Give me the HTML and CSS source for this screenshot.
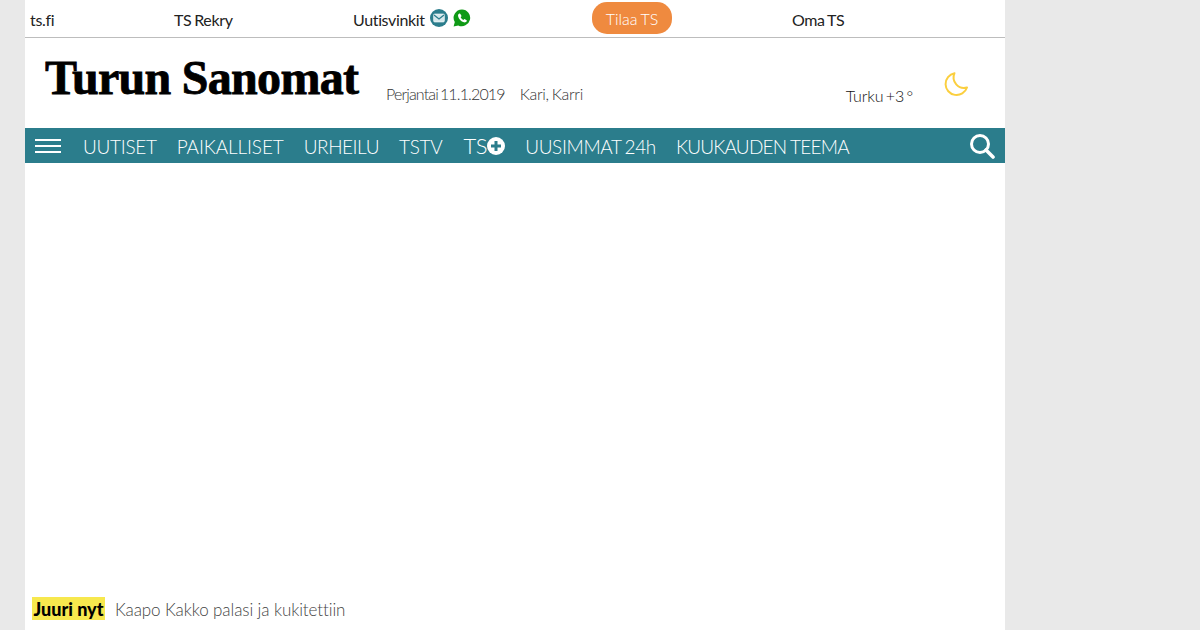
FILE: index.html
```html
<!DOCTYPE html>
<html lang="fi">
<head>
<meta charset="utf-8">
<title>Turun Sanomat</title>
<link rel="stylesheet" href="styles.css">
</head>
<body>
<div class="page">
  <div class="topbar">
    <a class="top-link">ts.fi</a>
    <a class="top-link">TS Rekry</a>
    <div class="top-link tips">Uutisvinkit
      <svg class="tip-icon" viewBox="0 0 18 18" width="18" height="18"><circle cx="9" cy="9" r="9" fill="#2b7d8c"/><rect x="3.6" y="5" width="10.8" height="8" rx="1.2" fill="#d5e8ec" stroke="#fff" stroke-width=".6"/><path d="M4 6l5 4 5-4" fill="none" stroke="#2b7d8c" stroke-width="1.3"/></svg>
      <svg class="tip-icon wa" viewBox="0 0 18 18" width="18" height="18"><path d="M9 .4a8.4 8.4 0 0 0-7.2 12.7L.6 17.6l4.6-1.2A8.4 8.4 0 1 0 9 .4z" fill="#0f9a16"/><path d="M6.3 4.4c-.9.5-1.5 1.500-1.200 2.900.5 2.700 3 5.300 5.800 6 1.300.3 2.300-.2 2.800-1.100.2-.4.200-.8-.1-1l-1.700-1c-.3-.2-.6-.1-.8.100l-.6.700c-1.300-.5-2.400-1.600-2.900-2.900l.7-.6c.2-.2.300-.5.100-.8l-1-1.800c-.2-.4-.7-.6-1.100-.4z" fill="#fff"/></svg>
    </div>
    <div class="top-cta"><a class="order">Tilaa TS</a></div>
    <a class="top-link">Oma TS</a>
  </div>

  <header class="masthead">
    <div class="logo">Turun Sanomat</div>
    <div class="dateline">
      <span class="date">Perjantai 11.1.2019</span>
      <span>Kari, Karri</span>
    </div>
    <div class="weather">
      <span class="temp">Turku +3 °</span>
      <svg class="moon" viewBox="0 0 26 26" width="26" height="26"><path d="M11.500 2.200A11 11 0 1 0 24 16.500 10.500 10.500 0 0 1 11.500 2.200z" fill="none" stroke="#fbcf3f" stroke-width="2" stroke-linejoin="round"/></svg>
    </div>
  </header>

  <nav class="nav">
    <div class="burger"><i></i><i></i><i></i></div>
    <a>UUTISET</a>
    <a class="wide">PAIKALLISET</a>
    <a class="sport">URHEILU</a>
    <a>TSTV</a>
    <a class="plus">TS<svg viewBox="0 0 18 18" width="18" height="18"><circle cx="9" cy="9" r="9" fill="#fff"/><path d="M9 4v10M4 9h10" stroke="#2b7d8c" stroke-width="3"/></svg></a>
    <a class="mid">UUSIMMAT 24h</a>
    <a class="long">KUUKAUDEN TEEMA</a>
    <svg class="search" viewBox="0 0 26 26" width="26" height="26"><circle cx="11" cy="11" r="8.500" fill="none" stroke="#fff" stroke-width="3"/><path d="M17 17l7 7" stroke="#fff" stroke-width="3.600" stroke-linecap="round"/></svg>
  </nav>

  <main class="content"></main>

  <div class="ticker">
    <span class="now">Juuri nyt</span>
    <span class="headline">Kaapo Kakko palasi ja kukitettiin</span>
  </div>
</div>
</body>
</html>
```

FILE: styles.css
```css
* { box-sizing: border-box; }
html, body { height: 100%; }
body {
  margin: 0;
  background: #e9e9e9;
  font-family: "Lato", "Open Sans", sans-serif;
  font-variant-ligatures: none;
  overflow: hidden;
}
.page {
  width: 980px;
  height: 630px;
  margin-left: 25px;
  background: #fff;
  display: flex;
  flex-direction: column;
}
.topbar {
  height: 38px;
  flex: none;
  border-bottom: 1px solid #bdbdbd;
  padding-left: 5px;
  display: grid;
  grid-template-columns: 144px 179px 239px 200px 1fr;
  align-items: center;
  font-size: 16px;
  color: #222;
}
.top-link { display: flex; align-items: center; padding-top: 1px; word-spacing: -1px; letter-spacing: -.35px; }
.tips svg { margin-left: 5px; margin-top: -3px; }
.top-cta { display: flex; }
.order {
  width: 80px;
  height: 32px;
  margin-top: -2px;
  border-radius: 15px;
  background: #ef8a3f;
  color: #fff;
  font-weight: 300;
  display: flex;
  align-items: center;
  justify-content: center;
  padding-top: 2px;
  word-spacing: -1px;
}
.masthead {
  height: 90px;
  flex: none;
  display: flex;
  align-items: flex-start;
  padding-left: 20px;
}
.logo {
  width: 341px;
  margin-top: 12px;
  font-family: "Liberation Serif", serif;
  font-weight: 700;
  font-size: 48px;
  line-height: 56px;
  letter-spacing: -.7px;
  color: #000;
  -webkit-text-stroke: .8px #000;
  white-space: nowrap;
}
.dateline {
  margin-top: 46px;
  display: flex;
  gap: 15px;
  font-size: 16px;
  font-weight: 300;
  color: #333;
  word-spacing: -1px;
  letter-spacing: -.3px;
}
.date { letter-spacing: -.85px; word-spacing: -1.5px; }
.weather {
  margin-left: auto;
  margin-right: 36px;
  margin-top: 33px;
  display: flex;
  align-items: flex-start;
  gap: 30px;
  font-size: 16px;
  font-weight: 300;
  color: #111;
  letter-spacing: -.15px;
  word-spacing: -1.7px;
}
.temp { margin-top: 15px; }
.nav {
  height: 35px;
  flex: none;
  background: #2b7d8c;
  color: #fff;
  display: flex;
  align-items: center;
  gap: 20px;
  padding: 0 10px;
  font-size: 19px;
  font-weight: 300;
  letter-spacing: -.3px;
  word-spacing: -1.5px;
}
.nav a { display: flex; align-items: center; padding-top: 2px; white-space: nowrap; }
.nav .wide { letter-spacing: -.12px; }
.nav .sport { letter-spacing: -.45px; }
.nav .mid { letter-spacing: -.35px; }
.nav .long { letter-spacing: -.8px; word-spacing: 0; }
.burger { width: 26px; margin-right: 2px; display: flex; flex-direction: column; gap: 4px; }
.burger i { display: block; height: 2px; background: #fff; }
.nav .plus { font-size: 22px; padding-top: 0; margin-left: 1px; }
.search { margin-left: auto; }
.content { flex: 1; }
.ticker {
  flex: none;
  height: 33px;
  padding-left: 7px;
  display: flex;
  align-items: flex-start;
  gap: 10px;
  font-size: 18px;
}
.now {
  background: #f7e84e;
  color: #000;
  font-weight: 900;
  height: 23px;
  line-height: 25px;
  padding: 0 1.5px;
}
.headline { color: #444; font-weight: 300; font-size: 17px; line-height: 26px; letter-spacing: -.1px; }
```
